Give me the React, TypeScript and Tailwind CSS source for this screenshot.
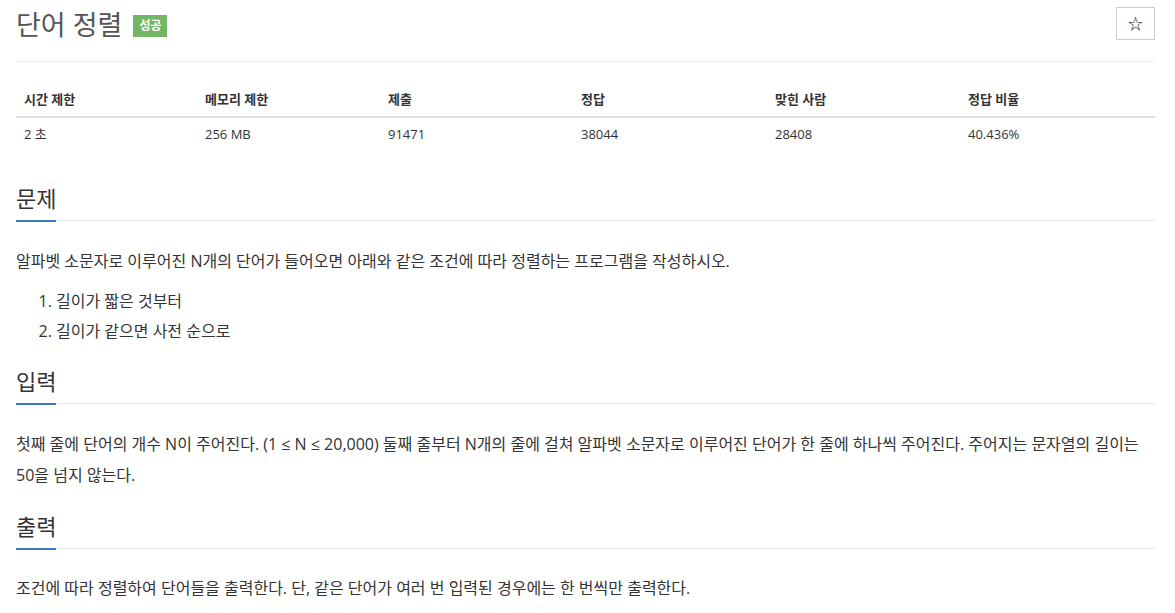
const FONT = { fontFamily: '"Open Sans", "Noto Sans CJK KR", sans-serif' }

const STATS = [
  { label: '시간 제한', value: '2 초' },
  { label: '메모리 제한', value: '256 MB' },
  { label: '제출', value: '91471' },
  { label: '정답', value: '38044' },
  { label: '맞힌 사람', value: '28408' },
  { label: '정답 비율', value: '40.436%' },
]

function SectionTitle({ children }: { children: string }) {
  return (
    <div className="relative border-b border-dotted border-[#ddd] pb-[7px]">
      <h2 className="text-[22px] leading-[30px] text-[#333]">{children}</h2>
      <div className="absolute left-0 bottom-[-2px] h-[2px] w-[40px] bg-[#3a7ac2]" />
    </div>
  )
}

export default function App() {
  return (
    <div className="bg-white pl-4 pr-5 text-[#333]" style={FONT}>
      {/* Header */}
      <div className="flex items-start justify-between border-b border-[#eee] pt-[7px] pb-[18px]">
        <div className="flex items-center gap-[11px]">
          <h1 className="text-[27px] leading-[36px] text-[#555]">단어 정렬</h1>
          <span className="mt-[2px] bg-[#74b566] px-[6px] py-[3px] text-[12px] font-bold leading-[16px] text-white">
            성공
          </span>
        </div>
        <button
          className="flex h-[33px] w-[39px] items-center justify-center border border-[#ccc] bg-white text-[15px] text-[#222]"
          style={{ fontFamily: '"Noto Sans CJK KR", sans-serif' }}
        >
          ☆
        </button>
      </div>

      {/* Stats table */}
      <div className="mt-[20px] grid grid-cols-[181px_183px_193px_194px_193px_1fr] text-[13px]">
        {STATS.map((s) => (
          <div key={s.label} className="border-b-2 border-[#ddd] px-2 py-[8px] font-bold leading-[18px]">
            {s.label}
          </div>
        ))}
        {STATS.map((s) => (
          <div key={s.value} className="px-2 py-[7px] leading-[18px]">
            {s.value}
          </div>
        ))}
      </div>

      {/* 문제 */}
      <div className="mt-[33px]">
        <SectionTitle>문제</SectionTitle>
        <div className="mt-[25px] text-[16px] leading-[30px]">
          <p>알파벳 소문자로 이루어진 N개의 단어가 들어오면 아래와 같은 조건에 따라 정렬하는 프로그램을 작성하시오.</p>
          <ol className="mt-[10px] list-decimal pl-[40px]">
            <li>길이가 짧은 것부터</li>
            <li>길이가 같으면 사전 순으로</li>
          </ol>
        </div>
      </div>

      {/* 입력 */}
      <div className="mt-[20px]">
        <SectionTitle>입력</SectionTitle>
        <p className="mt-[25px] text-[16px] leading-[31px]">
          첫째 줄에 단어의 개수 N이 주어진다. (1 ≤ N ≤ 20,000) 둘째 줄부터 N개의 줄에 걸쳐 알파벳 소문자로 이루어진 단어가 한 줄에 하나씩 주어진다. 주어지는 문자열의 길이는 50을 넘지 않는다.
        </p>
      </div>

      {/* 출력 */}
      <div className="mt-[20px]">
        <SectionTitle>출력</SectionTitle>
        <p className="mt-[24px] text-[16px] leading-[30px]">
          조건에 따라 정렬하여 단어들을 출력한다. 단, 같은 단어가 여러 번 입력된 경우에는 한 번씩만 출력한다.
        </p>
      </div>
    </div>
  )
}
